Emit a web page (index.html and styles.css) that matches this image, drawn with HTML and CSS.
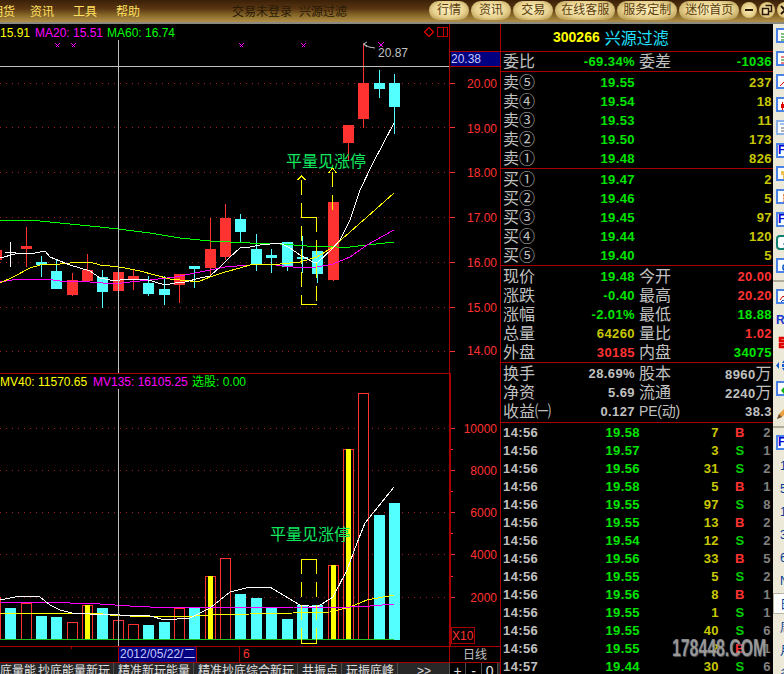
FILE: index.html
```html
<!DOCTYPE html>
<html lang="en">
<head>
    <meta charset="UTF-8">
    <title>交易未登录 兴源过滤</title>
    <link rel="stylesheet" href="styles.css">
</head>
<body>
    <header class="titlebar">
        <nav class="menu">
            <span class="menu-item">期货</span>
            <span class="menu-item">资讯</span>
            <span class="menu-item">工具</span>
            <span class="menu-item">帮助</span>
        </nav>
        <div class="title"><span>交易未登录</span><span>兴源过滤</span></div>
        <div class="pills">
            <span class="pill">行情</span>
            <span class="pill">资讯</span>
            <span class="pill">交易</span>
            <span class="pill pill-wide">在线客服</span>
            <span class="pill pill-wide">服务定制</span>
            <span class="pill pill-wide">迷你首页</span>
        </div>
        <div class="win-buttons">
            <span class="win-btn"><svg width="16" height="16"><path d="M4 8H12" stroke="#2a1a05" stroke-width="2"/></svg></span>
            <span class="win-btn"><svg width="16" height="16"><path d="M6.5 3.5H12.5V9.5H10M3.5 6.5H9.5V12.5H3.5Z" fill="none" stroke="#2a1a05" stroke-width="1.5"/></svg></span>
            <span class="win-btn"><svg width="16" height="16"><path d="M4 4L12 12M12 4L4 12" stroke="#2a1a05" stroke-width="2"/></svg></span>
        </div>
    </header>

    <div class="main">
        <div class="charts">
            <svg class="chart" width="500" height="639" viewBox="0 24 500 639">
                <!-- frame -->
                <path class="frame" d="M449.5 24V662M500.5 24V662M0 373.5H450M0 646.5H500M0 662.5H500M239.5 646V662M71.5 646V649"/>
                <path class="frame" d="M450.5 373V646M450 51.5H500M450 66.5H500"/>

                <!-- price grid -->
                <path class="grid" d="M0 83.5H449M0 127.5H449M0 172.5H449M0 217.5H449M0 262.5H449M0 307.5H449M0 351.5H449"/>
                <path class="tick" d="M450 83.5H455M450 127.5H455M450 172.5H455M450 217.5H455M450 262.5H455M450 307.5H455M450 351.5H455"/>
                <rect class="axis-box" x="451" y="52" width="49" height="14"/>
                <text class="axis-current" x="451" y="63">20.38</text>
                <g class="axis-labels">
                    <text x="497" y="88">20.00</text>
                    <text x="497" y="133">19.00</text>
                    <text x="497" y="177">18.00</text>
                    <text x="497" y="222">17.00</text>
                    <text x="497" y="267">16.00</text>
                    <text x="497" y="312">15.00</text>
                    <text x="497" y="355">14.00</text>
                </g>

                <!-- legend -->
                <text class="yellow" x="0" y="37">15.91</text>
                <text class="magenta" x="35" y="37">MA20: 15.51</text>
                <text class="green" x="107" y="37">MA60: 16.74</text>
                <path class="frame-bright" d="M429 27.5L433.5 32L429 36.5L424.5 32ZM437.5 27.5H447.5V36.5H437.5ZM443.5 27.5V36.5"/>

                <!-- signal marks -->
                <path class="marks" d="M55.5 43.5L59.5 47.5M59.5 43.5L55.5 47.5M71.5 43.5L75.5 47.5M75.5 43.5L71.5 47.5M239.5 43.5L243.5 47.5M243.5 43.5L239.5 47.5M301.5 43.5L305.5 47.5M305.5 43.5L301.5 47.5M378.5 42.5L383.5 47.5M383.5 42.5L378.5 47.5"/>

                <!-- candles -->
                <path class="wick-red" d="M26.5 227V267M72.5 273V296M87.5 254V282M118.5 272V297M133.5 269V290M179.5 274V303M210.5 218V277M225.5 204V260M333.5 202V281M348.5 143V160M363.5 44V128"/>
                <path class="wick-cyan" d="M41.5 256V277M56.5 260V271M102.5 270V308M148.5 276V296M164.5 276V305M194.5 266V288M240.5 214V242M256.5 234V271M271.5 249V273M287.5 242V271M302.5 236V273M317.5 251V283M379.5 70V98M394.5 74V134"/>
                <path class="wick-white" d="M10.5 242V267M5 252.5H16"/>
                <g class="body-red">
                    <rect x="-9" y="250" width="11" height="10"/>
                    <rect x="21" y="246" width="11" height="3"/>
                    <rect x="67" y="280" width="11" height="15"/>
                    <rect x="82" y="270" width="11" height="11"/>
                    <rect x="113" y="272" width="11" height="19"/>
                    <rect x="128" y="276" width="11" height="3"/>
                    <rect x="174" y="274" width="11" height="11"/>
                    <rect x="205" y="249" width="11" height="19"/>
                    <rect x="220" y="218" width="11" height="39"/>
                    <rect x="328" y="202" width="11" height="78"/>
                    <rect x="343" y="125" width="11" height="18"/>
                    <rect x="358" y="83" width="11" height="36"/>
                </g>
                <g class="body-cyan">
                    <rect x="36" y="262" width="11" height="3"/>
                    <rect x="51" y="271" width="11" height="18"/>
                    <rect x="97" y="277" width="11" height="15"/>
                    <rect x="143" y="283" width="11" height="11"/>
                    <rect x="159" y="289" width="11" height="6"/>
                    <rect x="189" y="266" width="11" height="3"/>
                    <rect x="235" y="219" width="11" height="13"/>
                    <rect x="251" y="249" width="11" height="16"/>
                    <rect x="266" y="255" width="11" height="3"/>
                    <rect x="282" y="242" width="11" height="25"/>
                    <rect x="297" y="257" width="11" height="2"/>
                    <rect x="312" y="251" width="11" height="23"/>
                    <rect x="374" y="83" width="11" height="6"/>
                    <rect x="389" y="83" width="11" height="24"/>
                </g>

                <!-- moving averages -->
                <polyline class="ma-green" points="0,221 30,220 60,223 100,227 118,229 150,233 180,238 210,241 250,243 280,244 307,246 337,247 350,247 367,245 394,242"/>
                <polyline class="ma-magenta" points="0,282 18,279 45,279 60,281 90,282 115,284 130,282 150,280 175,277 200,272 225,267 250,265 267,264 293,267 317,267 333,264 350,257 367,245 394,230"/>
                <polyline class="ma-yellow" points="0,283 13,277 30,268 40,265 60,264 80,262 90,262 100,265 110,266 125,268 140,271 155,275 170,279 190,281 200,281 210,277 225,272 240,268 253,264 280,264 300,262 317,257 333,247 350,232 367,217 394,193"/>
                <polyline class="ma-white" points="0,258 15,254 35,253 45,251 50,257 60,261 70,265 80,268 90,271 100,278 110,280 120,280 135,279 145,279 155,282 165,285 175,283 185,282 200,278 210,276 220,267 230,257 240,248 250,247 260,245 280,243 290,248 300,255 313,262 317,263 333,248 340,240 350,220 360,190 373,163 394,123"/>

                <!-- pattern marker -->
                <path class="marker" d="M301 217.5H317M301 304.5H317"/>
                <path class="marker-dash" d="M301.5 180V304M316.5 217V304M332.5 172V215"/>
                <path class="marker" d="M297.5 180L301.5 176L305.5 180M328.5 173L332.5 168L336.5 173"/>
                <text class="signal" x="286" y="167">平量见涨停</text>

                <path class="peak-arrow" d="M363.5 44L369 47L375 48M363.5 44L367 42M363.5 44L367 47"/>
                <text class="peak" x="378" y="57">20.87</text>

                <!-- volume grid -->
                <path class="grid" d="M0 428.5H449M0 470.5H449M0 512.5H449M0 554.5H449M0 597.5H449"/>
                <path class="tick" d="M451 428.5H455M451 449.5H453M451 470.5H455M451 491.5H453M451 512.5H455M451 533.5H453M451 554.5H455M451 576.5H453M451 597.5H455"/>
                <g class="axis-labels">
                    <text x="497" y="433">10000</text>
                    <text x="497" y="475">8000</text>
                    <text x="497" y="517">6000</text>
                    <text x="497" y="559">4000</text>
                    <text x="497" y="602">2000</text>
                </g>
                <text class="yellow" x="0" y="386">MV40: 11570.65</text>
                <text class="magenta" x="93" y="386">MV135: 16105.25</text>
                <text class="green" x="192" y="386">选股: 0.00</text>

                <!-- volume bars -->
                <g class="vol-red">
                    <rect x="-9.5" y="597.5" width="10" height="42"/>
                    <rect x="21.5" y="603.5" width="10" height="36"/>
                    <rect x="67.5" y="622.5" width="10" height="17"/>
                    <rect x="82.5" y="605.5" width="10" height="34"/>
                    <rect x="113.5" y="620.5" width="10" height="19"/>
                    <rect x="128.5" y="624.5" width="10" height="15"/>
                    <rect x="174.5" y="608.5" width="10" height="31"/>
                    <rect x="205.5" y="576.5" width="10" height="63"/>
                    <rect x="220.5" y="558.5" width="10" height="81"/>
                    <rect x="328.5" y="565.5" width="10" height="74"/>
                    <rect x="343.5" y="449.5" width="10" height="190"/>
                    <rect x="358.5" y="393.5" width="10" height="246"/>
                </g>
                <g class="vol-yellow">
                    <rect x="85" y="605" width="5" height="34"/>
                    <rect x="208" y="576" width="5" height="63"/>
                    <rect x="331" y="565" width="5" height="74"/>
                    <rect x="346" y="449" width="5" height="190"/>
                </g>
                <g class="body-cyan">
                    <rect x="5" y="608" width="11" height="31"/>
                    <rect x="36" y="616" width="11" height="23"/>
                    <rect x="51" y="617" width="11" height="22"/>
                    <rect x="97" y="608" width="11" height="31"/>
                    <rect x="143" y="625" width="11" height="14"/>
                    <rect x="159" y="622" width="11" height="17"/>
                    <rect x="189" y="607" width="11" height="32"/>
                    <rect x="235" y="594" width="11" height="45"/>
                    <rect x="251" y="598" width="11" height="41"/>
                    <rect x="266" y="608" width="11" height="31"/>
                    <rect x="282" y="619" width="11" height="20"/>
                    <rect x="297" y="605" width="11" height="34"/>
                    <rect x="312" y="605" width="11" height="34"/>
                    <rect x="374" y="515" width="11" height="124"/>
                    <rect x="389" y="503" width="11" height="137"/>
                </g>
                <path class="vol-base" d="M0 639.5H394"/>
                <polyline class="ma-yellow" points="0,613 95,613 110,615 130,616 170,616 180,617 210,615 250,614 293,613 330,612 350,607 367,600 394,595"/>
                <polyline class="ma-magenta" points="0,602 60,602 70,603 100,604 130,606 150,607 250,607 293,607 333,608 350,607 370,606 394,604"/>
                <polyline class="ma-white" points="0,600 15,597 27,596 40,597 50,605 60,610 72,613 90,614 120,615 150,616 165,620 190,618 210,608 230,592 250,587 270,587 283,595 300,605 317,607 333,597 347,570 357,543 365,523 394,487"/>

                <path class="marker" d="M301 559.5H317M301 643.5H317"/>
                <path class="marker-dash" d="M301.5 559V643M316.5 559V643"/>
                <text class="signal" x="270" y="540">平量见涨停</text>

                <!-- crosshair -->
                <path class="crosshair" d="M118.5 40V373M118.5 389V646M0 66.5H449"/>

                <!-- footer row -->
                <rect class="date-box" x="118.5" y="646.5" width="78" height="16"/>
                <text class="date" x="120" y="658">2012/05/22/二</text>
                <text class="axis-red" x="243" y="658">6</text>
                <rect class="x-box" x="451.5" y="627.5" width="23" height="16"/>
                <text class="axis-red" x="452" y="640">X10</text>
                <text class="period" x="463" y="659">日线</text>
            </svg>

            <div class="tabs">
                <span class="tab tab-first">底量能</span>
                <span class="tab">抄底能量新玩</span>
                <span class="tab">精准新玩能量</span>
                <span class="tab">精准抄底综合新玩</span>
                <span class="tab">共振点</span>
                <span class="tab">玩振底峰</span>
                <span class="tab tab-more">&gt;&gt;</span>
                <span class="tab-btn">+</span>
                <span class="tab-btn">-</span>
                <span class="tab-btn">0</span>
            </div>
        </div>

        <div class="quote">
            <div class="quote-head"><b>300266</b><span>兴源过滤</span></div>

            <div class="section">
                <div class="row"><span class="lbl">委比</span><span class="val down">-69.34%</span><span class="lbl">委差</span><span class="val down">-1036</span></div>
            </div>

            <div class="section section-five">
                <div class="row"><span class="lbl">卖⑤</span><span class="val down">19.55</span><i></i><span class="val vol">237</span></div>
                <div class="row"><span class="lbl">卖④</span><span class="val down">19.54</span><i></i><span class="val vol">18</span></div>
                <div class="row"><span class="lbl">卖③</span><span class="val down">19.53</span><i></i><span class="val vol">11</span></div>
                <div class="row"><span class="lbl">卖②</span><span class="val down">19.50</span><i></i><span class="val vol">173</span></div>
                <div class="row"><span class="lbl">卖①</span><span class="val down">19.48</span><i></i><span class="val vol">826</span></div>
            </div>

            <div class="section section-five">
                <div class="row"><span class="lbl">买①</span><span class="val down">19.47</span><i></i><span class="val vol">2</span></div>
                <div class="row"><span class="lbl">买②</span><span class="val down">19.46</span><i></i><span class="val vol">5</span></div>
                <div class="row"><span class="lbl">买③</span><span class="val down">19.45</span><i></i><span class="val vol">97</span></div>
                <div class="row"><span class="lbl">买④</span><span class="val down">19.44</span><i></i><span class="val vol">120</span></div>
                <div class="row"><span class="lbl">买⑤</span><span class="val down">19.40</span><i></i><span class="val vol">5</span></div>
            </div>

            <div class="section section-five">
                <div class="row"><span class="lbl">现价</span><span class="val down">19.48</span><span class="lbl">今开</span><span class="val up">20.00</span></div>
                <div class="row"><span class="lbl">涨跌</span><span class="val down">-0.40</span><span class="lbl">最高</span><span class="val up">20.20</span></div>
                <div class="row"><span class="lbl">涨幅</span><span class="val down">-2.01%</span><span class="lbl">最低</span><span class="val down">18.88</span></div>
                <div class="row"><span class="lbl">总量</span><span class="val vol">64260</span><span class="lbl">量比</span><span class="val up">1.02</span></div>
                <div class="row"><span class="lbl">外盘</span><span class="val up">30185</span><span class="lbl">内盘</span><span class="val down">34075</span></div>
            </div>

            <div class="section section-misc">
                <div class="row"><span class="lbl">换手</span><span class="val gray">28.69%</span><span class="lbl">股本</span><span class="val gray">8960<em>万</em></span></div>
                <div class="row"><span class="lbl">净资</span><span class="val gray">5.69</span><span class="lbl">流通</span><span class="val gray">2240<em>万</em></span></div>
                <div class="row"><span class="lbl">收益㈠</span><span class="val gray">0.127</span><span class="lbl lbl-small">PE(动)</span><span class="val gray">38.3</span></div>
            </div>

            <div class="ticks">
                <div class="tick-row"><span>14:56</span><span class="val down">19.58</span><span class="val vol">7</span><span class="side up">B</span><span class="count">2</span></div>
                <div class="tick-row"><span>14:56</span><span class="val down">19.57</span><span class="val vol">3</span><span class="side sell">S</span><span class="count">1</span></div>
                <div class="tick-row"><span>14:56</span><span class="val down">19.56</span><span class="val vol">31</span><span class="side sell">S</span><span class="count">2</span></div>
                <div class="tick-row"><span>14:56</span><span class="val down">19.58</span><span class="val vol">5</span><span class="side up">B</span><span class="count">1</span></div>
                <div class="tick-row"><span>14:56</span><span class="val down">19.55</span><span class="val vol">97</span><span class="side sell">S</span><span class="count">8</span></div>
                <div class="tick-row"><span>14:56</span><span class="val down">19.55</span><span class="val vol">13</span><span class="side up">B</span><span class="count">2</span></div>
                <div class="tick-row"><span>14:56</span><span class="val down">19.54</span><span class="val vol">12</span><span class="side sell">S</span><span class="count">2</span></div>
                <div class="tick-row"><span>14:56</span><span class="val down">19.56</span><span class="val vol">33</span><span class="side up">B</span><span class="count">5</span></div>
                <div class="tick-row"><span>14:56</span><span class="val down">19.55</span><span class="val vol">5</span><span class="side sell">S</span><span class="count">2</span></div>
                <div class="tick-row"><span>14:56</span><span class="val down">19.56</span><span class="val vol">8</span><span class="side up">B</span><span class="count">1</span></div>
                <div class="tick-row"><span>14:56</span><span class="val down">19.55</span><span class="val vol">1</span><span class="side sell">S</span><span class="count">1</span></div>
                <div class="tick-row"><span>14:56</span><span class="val down">19.55</span><span class="val vol">40</span><span class="side sell">S</span><span class="count">6</span></div>
                <div class="tick-row"><span>14:56</span><span class="val down">19.55</span><span class="val vol">2</span><span class="side up">B</span><span class="count">1</span></div>
                <div class="tick-row"><span>14:57</span><span class="val down">19.44</span><span class="val vol">30</span><span class="side sell">S</span><span class="count">6</span></div>
            </div>
            <div class="watermark">178448.COM</div>
        </div>

        <aside class="toolbar">
            <div class="tool"><svg class="tool-box" width="14" height="15"><path d="M3 4H8M3 7H8M3 10H6" stroke="#008000"/><path d="M7 11H11V14" stroke="#808080" fill="none"/></svg></div>
            <div class="tool"><svg class="tool-box" width="14" height="15"><path d="M3 4H10M3 10H10" stroke="#d00000"/><path d="M3 7H10" stroke="#008000"/><path d="M3 12H10" stroke="#008000"/></svg></div>
            <div class="tool"><svg class="tool-box" width="14" height="15"><path d="M2 10L6 6L9 8L12 5" stroke="#e00000" fill="none"/></svg></div>
            <div class="tool"><svg class="tool-box" width="14" height="15"><path d="M4.5 3V12" stroke="#e00000"/><rect x="3" y="5" width="3" height="4" fill="#e00000"/><rect x="8" y="3" width="3" height="8" fill="#008000"/></svg></div>
            <div class="tool"><svg class="tool-box tool-soft" width="14" height="15"><path d="M3 6H12M3 9H12M3 12H12" stroke="#606060"/><path d="M2 1H8V3H2Z" fill="#9cc0f0"/></svg></div>
            <div class="tool"><span class="tool-text">Fn</span></div>
            <div class="tool"><svg class="tool-box" width="14" height="15"><path d="M3 3H10V7H7V12H5V7H3Z" fill="#f0c050"/></svg></div>
            <div class="tool"><svg class="tool-box" width="14" height="15"><rect x="5" y="3" width="6" height="9" fill="#f08040"/><path d="M5 6H11M5 9H11" stroke="#fff"/></svg></div>
            <div class="tool"><span class="tool-text">Fn</span></div>
            <div class="tool"><svg class="tool-box tool-teal" width="14" height="15"><path d="M6 12L8 3H11M5 7H10M10 8V12" stroke="#005a9c" fill="none"/></svg></div>
            <div class="tool"><svg class="tool-box" width="14" height="15"><path d="M11 4H7L5 6V9L7 11H11" stroke="#0050c0" stroke-width="1.5" fill="none"/></svg></div>
            <div class="tool-sep"></div>
            <div class="tool"><svg class="tool-box" width="14" height="15"><path d="M2 9L5 5L8 8L12 4" stroke="#d00000" fill="none"/><path d="M2 12L5 9L8 11L12 8" stroke="#0040c0" fill="none"/></svg></div>
            <div class="tool"><span class="tool-letter">R</span></div>
            <div class="tool"><svg width="14" height="15"><path d="M10 3H4V6H9V9H4V12H10" stroke="#e00000" stroke-width="2.5" fill="none"/></svg></div>
            <div class="tool"><svg width="14" height="15"><path d="M0 7.5L3 4V11ZM9 1L12 5H6ZM9 14L6 10H12ZM14 7.5L11 4V11Z" fill="#1858d0"/><rect x="6" y="6" width="6" height="3" fill="#1858d0"/></svg></div>
            <div class="tool"><svg class="tool-box" width="14" height="15"><path d="M3 7.5L6 4V6H10V9H6V11Z" fill="#10b010"/></svg></div>
            <div class="tool"><svg width="14" height="18"><path d="M1 16L3 11L11 3L14 6L6 14Z" fill="#e8a040"/><path d="M1 16L3 11L6 14Z" fill="#705030"/></svg></div>
            <div class="tool-sep"></div>
            <div class="tool"><span class="tool-text">F</span></div>
            <div class="tool tool-label">1</div>
            <div class="tool tool-label">5</div>
            <div class="tool tool-label">1</div>
            <div class="tool tool-label">3</div>
            <div class="tool tool-label">6</div>
            <div class="tool tool-label">N</div>
            <div class="tool tool-label tool-active">日</div>
            <div class="tool tool-label">周</div>
            <div class="tool tool-label">月</div>
            <div class="tool tool-label">多</div>
        </aside>
    </div>
</body>
</html>
```

FILE: styles.css
```css
/* terminal window, fixed size */
* {
    margin: 0;
    padding: 0;
    box-sizing: border-box;
}

body {
    width: 784px;
    height: 674px;
    overflow: hidden;
    background: #000;
    font-family: 'Liberation Sans', 'Noto Sans CJK SC', sans-serif;
    font-size: 12px;
}

/* title bar */
.titlebar {
    display: flex;
    align-items: center;
    height: 24px;
    padding-bottom: 2px;
    border-bottom: 2px solid #8c8a80;
    background: linear-gradient(to bottom, #3a2008 0%, #5a3612 40%, #8a6a2a 70%, #b09048 100%);
    overflow: hidden;
    white-space: nowrap;
}

.menu {
    display: flex;
    flex: none;
    gap: 19px;
    margin-left: -9px;
    color: #ffe060;
}

.menu-item:first-child {
    margin-right: -4px;
}

.title {
    display: flex;
    flex: none;
    gap: 7px;
    margin-left: 92px;
    color: #2a1a05;
}

.pills {
    display: flex;
    flex: none;
    gap: 2px;
    margin-left: 82px;
}

.pill {
    height: 19px;
    line-height: 19px;
    padding: 0 8px;
    border-radius: 10px;
    color: #5a4010;
    background: radial-gradient(ellipse at 50% 45%, #fff0c0 0%, #e8d290 55%, #a08034 100%);
}

.pill-wide {
    padding: 0 6px;
}

.win-buttons {
    display: flex;
    flex: none;
    gap: 2px;
    margin-left: 2px;
}

.win-btn {
    flex: none;
    width: 16px;
    height: 16px;
    border-radius: 50%;
    background: radial-gradient(circle, #fff0c0 0%, #e0c880 60%, #a08034 100%);
}

.win-btn svg {
    display: block;
}

.main {
    display: flex;
    height: 650px;
}

/* chart column */
.charts {
    width: 500px;
    flex: none;
    display: flex;
    flex-direction: column;
}

.chart {
    display: block;
    flex: none;
}

.chart text {
    font-size: 12px;
}

.frame {
    stroke: #a80000;
    fill: none;
    shape-rendering: crispEdges;
}

.frame-bright {
    stroke: #c00000;
    fill: none;
    shape-rendering: crispEdges;
}

.grid {
    stroke: #a02020;
    stroke-dasharray: 1 5;
    fill: none;
    shape-rendering: crispEdges;
}

.tick {
    stroke: #ff3232;
    shape-rendering: crispEdges;
}

.axis-box {
    fill: #000080;
}

.axis-current {
    fill: #c8c8ff;
}

.axis-labels text {
    fill: #ff3232;
    text-anchor: end;
}

.axis-red {
    fill: #ff3232;
}

.yellow { fill: #ffff00; }
.magenta { fill: #ff00ff; }
.green { fill: #00ff00; }

.marks {
    stroke: #ff00ff;
    fill: none;
    shape-rendering: crispEdges;
}

.wick-red,
.wick-cyan,
.wick-white {
    fill: none;
    shape-rendering: crispEdges;
}

.wick-red { stroke: #ff3232; }
.wick-cyan { stroke: #54ffff; }
.wick-white { stroke: #fff; }

.body-red { fill: #ff3232; shape-rendering: crispEdges; }
.body-cyan { fill: #54ffff; shape-rendering: crispEdges; }

.vol-red rect {
    fill: #000;
    stroke: #ff3232;
    shape-rendering: crispEdges;
}

.vol-yellow { fill: #ffff00; shape-rendering: crispEdges; }

.vol-base {
    stroke: #20c020;
    shape-rendering: crispEdges;
}

.ma-green,
.ma-magenta,
.ma-yellow,
.ma-white {
    fill: none;
    shape-rendering: crispEdges;
}

.ma-green { stroke: #00ff00; }
.ma-magenta { stroke: #ff00ff; }
.ma-yellow { stroke: #ffff00; }
.ma-white { stroke: #fff; }

.marker {
    stroke: #ffff00;
    fill: none;
    shape-rendering: crispEdges;
}

.marker-dash {
    stroke: #ffff00;
    stroke-dasharray: 15 8;
    fill: none;
    shape-rendering: crispEdges;
}

.chart .signal {
    fill: #10e860;
    font-size: 16px;
}

.peak-arrow {
    stroke: #c0c0c0;
    fill: none;
}

.peak {
    fill: #c0c0c0;
}

.crosshair {
    stroke: #c0c0c0;
    fill: none;
    shape-rendering: crispEdges;
}

.date-box {
    fill: #000080;
    stroke: #a80000;
    shape-rendering: crispEdges;
}

.date {
    fill: #c8c8ff;
}

.x-box {
    fill: none;
    stroke: #a80000;
    shape-rendering: crispEdges;
}

.period {
    fill: #c0c0c0;
}

/* formula tabs along the bottom */
.tabs {
    display: flex;
    height: 11px;
    overflow: hidden;
    background: #282828;
    color: #e0e0e0;
    line-height: 16px;
}

.tab {
    flex: none;
    padding: 0 3px 0 4px;
    border-right: 1px solid #505050;
    white-space: nowrap;
}

.tab-first {
    width: 34px;
    padding: 0 3px 0 0;
    text-align: right;
}

.tab-more {
    width: 52px;
    text-align: center;
}

.tab-btn {
    flex: none;
    width: 16px;
    background: #000;
    border-right: 1px solid #505050;
    text-align: center;
    font-size: 14px;
}

/* quote panel */
.quote {
    position: relative;
    width: 273px;
    flex: none;
    border-left: 1px solid #a80000;
    overflow: hidden;
}

.quote-head {
    display: flex;
    align-items: center;
    gap: 5px;
    height: 28px;
    padding: 0 0 1px 52px;
    border-bottom: 1px solid #a80000;
    color: #ffff00;
}

.quote-head b {
    font-size: 14px;
}

.quote-head span {
    color: #20e0ff;
    font-size: 16px;
}

.section {
    border-bottom: 1px solid #a80000;
}

.section-five {
    height: 97px;
    padding-top: 1px;
}

.section-misc {
    padding: 1px 0;
}

.row {
    display: grid;
    grid-template-columns: 36px 92px 32px 97px;
    column-gap: 4px;
    height: 19px;
    padding-left: 2px;
    line-height: 19px;
    white-space: nowrap;
}

.lbl {
    color: #c0c0c0;
    font-size: 16px;
}

.lbl-small {
    font-size: 14px;
    letter-spacing: -0.2px;
}

.val {
    text-align: right;
    font-size: 13px;
    font-weight: bold;
    letter-spacing: 0.4px;
}

.val em {
    font-style: normal;
    font-weight: normal;
    font-size: 16px;
}

.up { color: #ff3232; }
.down { color: #00e600; }
.vol { color: #c8c800; }
.gray { color: #c0c0c0; }
.sell { color: #00d000; }

.ticks {
    padding-top: 1px;
}

.tick-row {
    display: grid;
    grid-template-columns: 40px 97px 79px 42px 10px;
    height: 18px;
    padding-left: 2px;
    line-height: 18px;
    color: #c0c0c0;
    font-size: 13px;
    font-weight: bold;
    letter-spacing: 0.4px;
}

.side {
    text-align: center;
}

.count {
    text-align: right;
    color: #808080;
}

.watermark {
    position: absolute;
    left: 171px;
    top: 612px;
    width: 150px;
    color: rgba(175, 175, 175, 0.8);
    font-size: 24px;
    font-weight: bold;
    line-height: 24px;
    text-shadow: 1px 1px 1px #555;
    transform: scaleX(0.66);
    transform-origin: left center;
    white-space: nowrap;
}

/* side toolbar, mostly cut off at the window edge */
.toolbar {
    width: 11px;
    flex: none;
    background: #ece9d8;
    overflow: hidden;
}

.tool {
    display: flex;
    align-items: center;
    width: 24px;
    height: 23px;
    padding-left: 3px;
}

.tool svg {
    flex: none;
}

.tool-box {
    background: #fff;
    border: 2px solid #4a82e8;
}

.tool-soft {
    border-color: #8cb0e8;
}

.tool-teal {
    border-color: #108070;
    border-radius: 4px;
}

.tool-text {
    flex: none;
    width: 14px;
    height: 15px;
    border: 2px solid #4a82e8;
    background: #fff;
    color: #0000d0;
    font-size: 12px;
    font-weight: bold;
    line-height: 11px;
}

.tool-letter {
    color: #1838d0;
    font-size: 12px;
    font-weight: bold;
}

.tool-sep {
    display: flex;
    align-items: center;
    height: 8px;
}

.tool-sep::before {
    content: '';
    width: 100%;
    border-top: 2px solid #b0ac9c;
}

.tool-label {
    padding-left: 7px;
    color: #003c96;
    font-size: 12px;
}

.tool-active {
    width: 11px;
    height: 21px;
    margin: 1px 0;
    padding-left: 6px;
    background: #fff;
    border: 1px solid #b8b4a4;
    border-right: none;
    overflow: hidden;
}
```
